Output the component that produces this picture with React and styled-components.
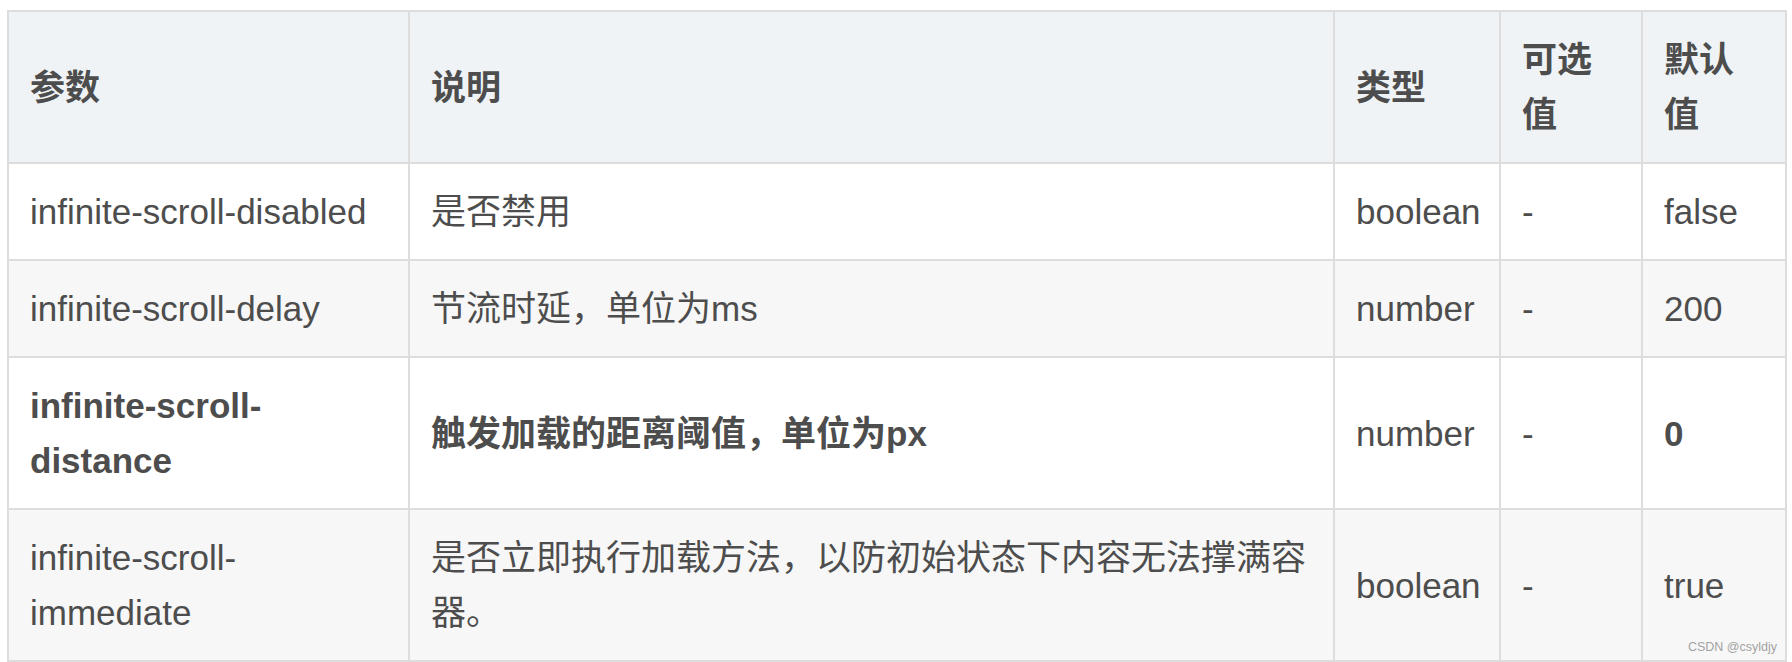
import styled, { createGlobalStyle } from "styled-components";
import React from "react";

const rows = [
    { name: "infinite-scroll-disabled", desc: "是否禁用", type: "boolean", options: "-", def: "false" },
    { name: "infinite-scroll-delay", desc: "节流时延，单位为ms", type: "number", options: "-", def: "200" },
    { name: "infinite-scroll-distance", desc: "触发加载的距离阈值，单位为px", type: "number", options: "-", def: "0", strong: true },
    { name: "infinite-scroll-immediate", desc: "是否立即执行加载方法，以防初始状态下内容无法撑满容器。", type: "boolean", options: "-", def: "true" },
];

export default function App() {
    return (
        <Page>
            <GlobalStyle />
            <Frame>
                <Table>
                    <colgroup>
                        <col style={{ width: 401 }} />
                        <col style={{ width: 925 }} />
                        <col style={{ width: 166 }} />
                        <col style={{ width: 142 }} />
                        <col />
                    </colgroup>
                    <thead>
                        <tr>
                            <th>参数</th>
                            <th>说明</th>
                            <th>类型</th>
                            <th>可选值</th>
                            <th>默认值</th>
                        </tr>
                    </thead>
                    <tbody>
                        {rows.map((r) => (
                            <Row key={r.name}>
                                <Cell $bold={r.strong}>{r.name}</Cell>
                                <Cell $bold={r.strong}>{r.desc}</Cell>
                                <Cell>{r.type}</Cell>
                                <Cell>{r.options}</Cell>
                                <Cell $bold={r.strong}>{r.def}</Cell>
                            </Row>
                        ))}
                    </tbody>
                </Table>
                <Watermark>CSDN @csyldjy</Watermark>
            </Frame>
        </Page>
    );
}

const GlobalStyle = createGlobalStyle`
    body{
        margin: 0;
        background: #ffffff;
    }
`;

const Page = styled.div`
    padding: 10px 0 0 7px;
    font-family: "Liberation Sans", "Noto Sans CJK SC", sans-serif;
    color: #4d4d4d;
`;

const Frame = styled.div`
    position: relative;
    width: 1780px;
`;

const Table = styled.table`
    width: 1780px;
    table-layout: fixed;
    border-collapse: collapse;
    font-size: 35px;
    line-height: 55px;
    th, td{
        border: 2px solid #dddddd;
        padding: 20px 20px 20px 21px;
        text-align: left;
        vertical-align: middle;
    }
    th{
        background: #eff3f5;
        font-weight: 700;
    }
`;

const Row = styled.tr`
    background: #ffffff;
    &:nth-child(even){
        background: #f7f7f7;
    }
`;

const Cell = styled.td`
    font-weight: ${(p) => (p.$bold ? 700 : 400)};
`;

const Watermark = styled.span`
    position: absolute;
    right: 10px;
    bottom: 7px;
    font-family: "Liberation Sans", "Noto Sans CJK SC", sans-serif;
    font-size: 12.5px;
    line-height: 16px;
    color: #a3a3a3;
`;
